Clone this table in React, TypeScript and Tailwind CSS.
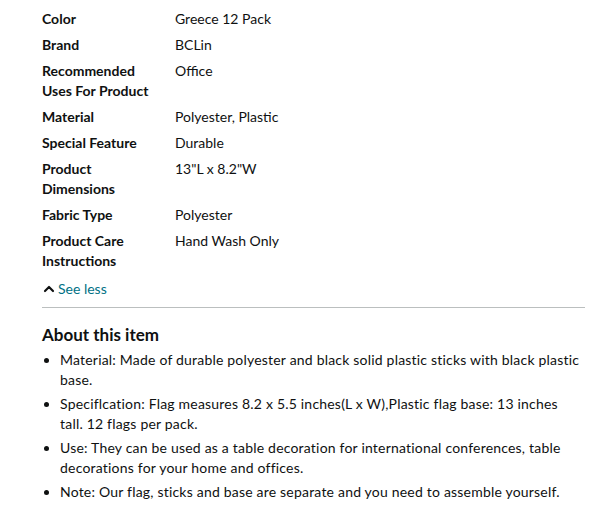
import { ChevronUp } from "lucide-react";

export default function App() {
  const specs = [
    { label: "Color", value: "Greece 12 Pack" },
    { label: "Brand", value: "BCLin" },
    { label: "Recommended Uses For Product", value: "Office" },
    { label: "Material", value: "Polyester, Plastic" },
    { label: "Special Feature", value: "Durable" },
    { label: "Product Dimensions", value: "13\"L x 8.2\"W" },
    { label: "Fabric Type", value: "Polyester" },
    { label: "Product Care Instructions", value: "Hand Wash Only" },
  ];

  const bullets = [
    "Material: Made of durable polyester and black solid plastic sticks with black plastic base.",
    "Speciflcation: Flag measures 8.2 x 5.5 inches(L x W),Plastic flag base: 13 inches tall. 12 flags per pack.",
    "Use: They can be used as a table decoration for international conferences, table decorations for your home and offices.",
    "Note: Our flag, sticks and base are separate and you need to assemble yourself.",
  ];

  return (
    <div className="min-h-screen bg-white text-[#0F1111] text-[14px] leading-[20px] font-['Lato','Liberation_Sans',sans-serif]">
      <div className="w-[543px] ml-[42px] pt-[9px]">
        {/* product details table */}
        <div className="flex flex-col gap-[6px]">
          {specs.map((s) => (
            <div key={s.label} className="flex">
              <div className="w-[133px] shrink-0 pr-[16px] font-bold">{s.label}</div>
              <div className="flex-1">{s.value}</div>
            </div>
          ))}
        </div>

        <div className="mt-[8px] flex items-center gap-[1px] text-[#007185]">
          <ChevronUp className="w-[16px] h-[16px] text-[#0F1111] -ml-[1px]" strokeWidth={3.2} />
          <span>See less</span>
        </div>

        <div className="mt-[8px] h-px bg-[#BBBFBF]" />

        {/* about this item */}
        <h2 className="mt-[15px] text-[17px] leading-[24px] font-bold">About this item</h2>
        <ul className="mt-[3px] flex flex-col gap-[4px] list-disc pl-[18px] pr-[3px] tracking-[0.2px]">
          {bullets.map((b) => (
            <li key={b}>{b}</li>
          ))}
        </ul>
      </div>
    </div>
  );
}
